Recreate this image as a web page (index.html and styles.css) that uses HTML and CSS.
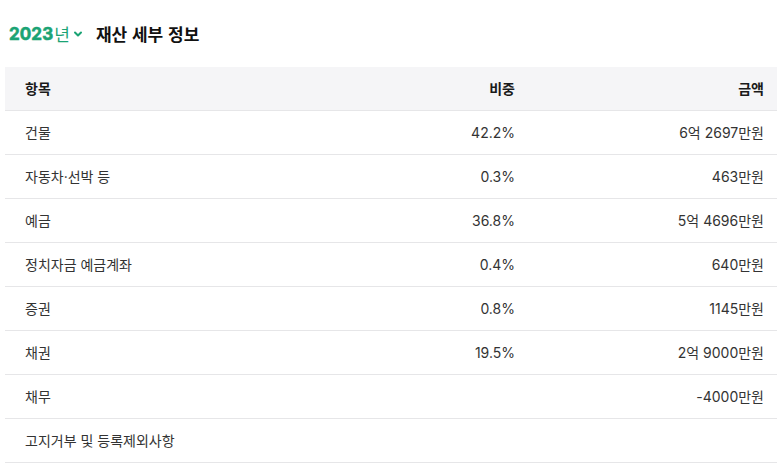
FILE: index.html
```html
<!DOCTYPE html>
<html lang="ko">
<head>
<meta charset="utf-8">
<link rel="stylesheet" href="styles.css">
</head>
<body>
<div class="page">
  <div class="title-bar">
    <button class="year"><span class="digits">2023</span><span class="nyeon">년</span>
      <svg class="chev" width="10" height="10" viewBox="0 0 10 10"><path d="M2 3.5 L5 6.5 L8 3.5" fill="none" stroke="#1aa374" stroke-width="2" stroke-linecap="round" stroke-linejoin="round"/></svg>
    </button>
    <h2 class="title">재산 세부 정보</h2>
  </div>
  <div class="table">
    <div class="row head"><div class="c1">항목</div><div class="c2">비중</div><div class="c3">금액</div></div>
    <div class="row"><div class="c1">건물</div><div class="c2">42.2%</div><div class="c3">6억 2697만원</div></div>
    <div class="row"><div class="c1">자동차·선박 등</div><div class="c2">0.3%</div><div class="c3">463만원</div></div>
    <div class="row"><div class="c1">예금</div><div class="c2">36.8%</div><div class="c3">5억 4696만원</div></div>
    <div class="row"><div class="c1">정치자금 예금계좌</div><div class="c2">0.4%</div><div class="c3">640만원</div></div>
    <div class="row"><div class="c1">증권</div><div class="c2">0.8%</div><div class="c3">1145만원</div></div>
    <div class="row"><div class="c1">채권</div><div class="c2">19.5%</div><div class="c3">2억 9000만원</div></div>
    <div class="row"><div class="c1">채무</div><div class="c2"></div><div class="c3">-4000만원</div></div>
    <div class="row"><div class="c1">고지거부 및 등록제외사항</div><div class="c2"></div><div class="c3"></div></div>
  </div>
</div>
</body>
</html>
```
FILE: styles.css
```css
html, body { margin: 0; padding: 0; background: #fff; }
body { font-family: "Inter", "Noto Sans CJK KR", sans-serif; color: #222; }
.page { padding: 0 0 0 5px; }
.title-bar { display: flex; align-items: center; height: 67px; padding-left: 4px; box-sizing: border-box; }
.year { display: flex; align-items: center; border: 0; background: none; padding: 0; margin: 0; font-family: "Inter", "Noto Sans CJK KR", sans-serif; font-size: 17px; font-weight: 700; color: #1aa374; cursor: pointer; }
.digits { -webkit-text-stroke: 0.6px #1aa374; letter-spacing: 0.1px; }
.nyeon { font-family: "Noto Sans CJK KR", sans-serif; font-weight: 400; margin-left: 1px; }
.chev { margin-left: 3px; margin-top: 1px; }
.title { margin: 0 0 0 13px; font-family: "Noto Sans CJK KR", sans-serif; font-size: 17px; font-weight: 700; color: #111; }
.table { display: flex; flex-direction: column; }
.row { display: grid; grid-template-columns: 1fr 248px 249px; height: 44px; border-bottom: 1px solid #e6e6e8; box-sizing: border-box; align-items: center; font-size: 14px; color: #333; padding-bottom: 1px; }
.row.head { background: #f5f5f7; font-weight: 700; color: #1a1a1a; }
.c1 { padding-left: 20px; }
.c2, .c3 { text-align: right; padding-right: 13px; }
```
